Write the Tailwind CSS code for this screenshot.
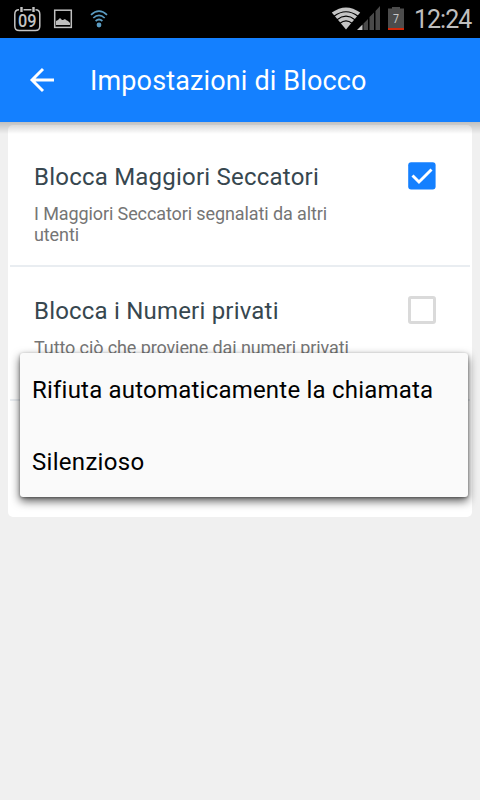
<!DOCTYPE html>
<html lang="it">
<head>
<meta charset="utf-8">
<title>Impostazioni di Blocco</title>
<script src="https://cdn.jsdelivr.net/npm/@tailwindcss/browser@4"></script>
</head>
<body class="w-[480px] h-[800px] overflow-hidden bg-[#f0f0f0] font-['Roboto',sans-serif]">
<div class="relative w-[480px] h-[800px] flex flex-col overflow-hidden">
  <!-- Status bar -->
  <div class="h-[38px] shrink-0 bg-black flex items-start text-[#bebebe]">
    <svg class="ml-[13px] mt-[6px]" width="28" height="26" viewBox="0 0 28 26">
      <path d="M6 3.800Q1.800 3.800 1.800 8.300V20Q1.800 24.600 6.300 24.600H22.300Q26.800 24.600 26.800 20V8.300Q26.800 3.800 22.500 3.800M10.500 3.800H18.500" fill="none" stroke="#c4c4c4" stroke-width="1.500"/>
      <path d="M8.500 1v5M20.500 1v5" stroke="#c4c4c4" stroke-width="2.400"/>
      <text x="14.200" y="20.600" text-anchor="middle" font-family="Roboto" font-size="18" font-weight="500" textLength="18.500" lengthAdjust="spacingAndGlyphs" fill="#c4c4c4">09</text>
    </svg>
    <svg class="ml-[12px] mt-[9px]" width="20" height="20" viewBox="0 0 20 20">
      <rect x="1.700" y="1.200" width="16.600" height="17.200" fill="none" stroke="#c0c0c0" stroke-width="1.500"/>
      <path d="M3 16v-4l2-1 2-2 2 2h1l2-1 1 1 2 1 2 2v2z" fill="#c0c0c0"/>
    </svg>
    <svg class="ml-[17px] mt-[10px]" width="18" height="18" viewBox="0 0 18 18" fill="none" stroke="#5b9cc2" stroke-width="1.700">
      <path d="M1 4.800Q9 -2.600 17 4.800M3.300 8Q9 2.600 14.700 8M5.600 11Q9 8 12.400 11"/>
      <circle cx="9" cy="15" r="2.400" fill="#5b9cc2" stroke="none"/>
    </svg>
    <svg class="ml-[223px] mt-[5px]" width="76" height="27" viewBox="0 0 76 27">
      <path d="M.8 7.600Q15 -2.800 29.200 7.600L15 24.500z" fill="#c4c4c4"/>
      <path d="M3 11.200Q15 2.300 27 11.200M6 14.700Q15 7.700 24 14.700M9 18.200Q15 13.400 21 18.200" fill="none" stroke="#000" stroke-width="1.200"/>
      <path d="M26 25L31.500 19.500V25z" fill="#c4c4c4"/>
      <path d="M32.500 18.500L37 14V25H32.500zM38.500 12L43 7.500V25H38.500zM44.500 6L49 1V25H44.500z" fill="#4a4a4a"/>
      <path d="M57 3.500h4V2h8v1.500h4V23H57z" fill="#4c4c4c"/>
      <path d="M57 23h16v2H57z" fill="#d0290b"/>
      <text x="65" y="17.800" text-anchor="middle" font-family="Roboto" font-size="13" textLength="6" lengthAdjust="spacingAndGlyphs" fill="#c8c8c8">7</text>
    </svg>
    <span class="ml-[7px] mt-[4px] text-[25px] leading-[32px] tracking-[-1px] whitespace-nowrap">12:24</span>
  </div>
  <!-- App bar -->
  <div class="relative z-10 h-[84px] shrink-0 bg-[#1480ff] flex items-center">
    <svg class="ml-[29px]" width="26" height="26" viewBox="0 0 26 26" fill="none" stroke="#fff" stroke-width="2.900">
      <path d="M25 13H3M14 2L3 13L14 24"/>
    </svg>
    <h1 class="ml-[35px] mt-[2px] text-[27px] leading-[32px] tracking-[0.14px] text-white whitespace-nowrap">Impostazioni di Blocco</h1>
    <div class="absolute left-0 top-full w-full h-[12px] bg-linear-to-b from-black/20 to-transparent"></div>
  </div>
  <!-- Settings card -->
  <div class="mx-2 mt-[3px] h-[392px] rounded-[5px] bg-white px-[2px]">
    <div class="h-[142px] border-b-2 border-[#e9edf1] pl-[24px] pr-[34px] pt-[36px] flex justify-between">
      <div class="w-[330px]">
        <h2 class="text-[24px] leading-[32px] tracking-[0.22px] text-[#37474f] whitespace-nowrap">Blocca Maggiori Seccatori</h2>
        <p class="mt-[10px] text-[18px] leading-[21px] tracking-[-0.1px] text-[#757575] whitespace-nowrap">I Maggiori Seccatori segnalati da altri<br>utenti</p>
      </div>
      <svg class="mt-[1px]" width="28" height="28" viewBox="0 0 28 28">
        <rect x=".2" y=".2" width="27.400" height="27.400" rx="3" fill="#1480ff"/>
        <path d="M4.500 13.500L11 20L23.500 7.500" fill="none" stroke="#fff" stroke-width="2.900"/>
      </svg>
    </div>
    <div class="h-[134px] border-b-2 border-[#e9edf1] pl-[24px] pr-[34px] pt-[28px] flex justify-between">
      <div class="w-[330px]">
        <h2 class="text-[24px] leading-[32px] tracking-[0.2px] text-[#37474f] whitespace-nowrap">Blocca i Numeri privati</h2>
        <p class="mt-[10px] text-[18px] leading-[21px] tracking-[-0.1px] text-[#757575] whitespace-nowrap">Tutto ciò che proviene dai numeri privati</p>
      </div>
      <div class="mt-[1px] w-[28px] h-[28px] rounded-[3px] border-[3px] border-[#dadada]"></div>
    </div>
  </div>
  <!-- Popup menu -->
  <div class="absolute z-20 left-[20px] top-[353px] w-[448px] h-[144px] rounded-[3px] bg-[#fafafa] shadow-[0_4px_10px_rgba(0,0,0,0.65),0_1px_3px_rgba(0,0,0,0.35)] text-black text-[24px] tracking-[0.21px]">
    <div class="h-[72px] pl-[12px] pt-[2px] flex items-center whitespace-nowrap"><span>Rifiuta automaticamente la chiamata</span></div>
    <div class="h-[72px] pl-[12px] pt-[2px] flex items-center whitespace-nowrap"><span class="tracking-[0.3px]">Silenzioso</span></div>
  </div>
</div>
</body>
</html>
